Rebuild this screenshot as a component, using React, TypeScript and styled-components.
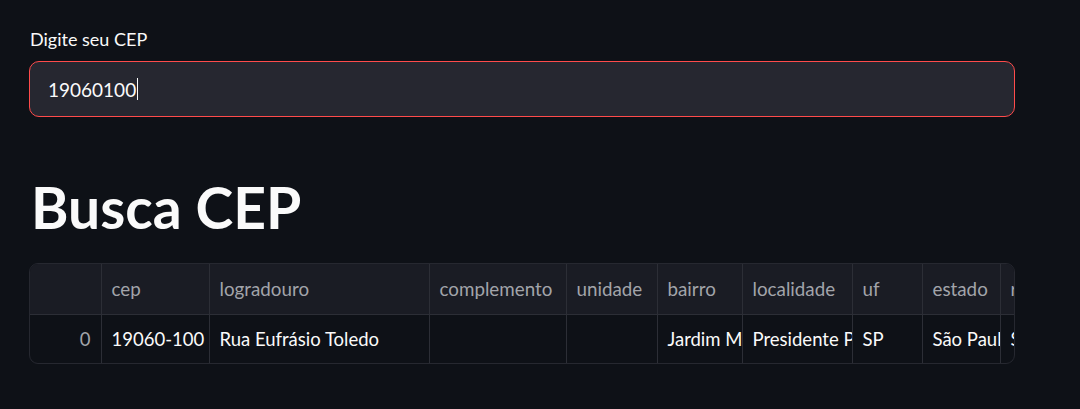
import styled, {createGlobalStyle} from 'styled-components'

const GlobalStyle = createGlobalStyle`
  html, body {
    margin: 0;
    padding: 0;
    background-color: #0e1117;
    color: #fafafa;
    font-family: Lato, "Open Sans", sans-serif;
  }
`

const columns = [
  {key: 'cep', width: 108},
  {key: 'logradouro', width: 220},
  {key: 'complemento', width: 137},
  {key: 'unidade', width: 91},
  {key: 'bairro', width: 85},
  {key: 'localidade', width: 110},
  {key: 'uf', width: 70},
  {key: 'estado', width: 78},
  {key: 'regiao', width: 100},
]

const indexWidth = 71
const tableWidth = columns.reduce((sum, c) => sum + c.width, indexWidth)

const row: Record<string, string> = {
  cep: '19060-100',
  logradouro: 'Rua Eufrásio Toledo',
  complemento: '',
  unidade: '',
  bairro: 'Jardim Marupiara',
  localidade: 'Presidente Prudente',
  uf: 'SP',
  estado: 'São Paulo',
  regiao: 'Sudeste',
}

function App() {
  return (
    <Main>
      <GlobalStyle />
      <Label>Digite seu CEP</Label>
      <InputBox>
        <InputValue>19060100</InputValue>
        <Caret />
      </InputBox>
      <Title>Busca CEP</Title>
      <Frame>
        <Table style={{width: tableWidth}}>
          <colgroup>
            <col style={{width: indexWidth}} />
            {columns.map(c => (
              <col key={c.key} style={{width: c.width}} />
            ))}
          </colgroup>
          <thead>
            <tr>
              <HeadCell />
              {columns.map(c => (
                <HeadCell key={c.key}>{c.key}</HeadCell>
              ))}
            </tr>
          </thead>
          <tbody>
            <tr>
              <IndexCell>0</IndexCell>
              {columns.map(c => (
                <Cell key={c.key}>{row[c.key]}</Cell>
              ))}
            </tr>
          </tbody>
        </Table>
      </Frame>
    </Main>
  )
}

const Main = styled.div`
  width: 986px;
  padding: 28px 0 0 29px;
`

const Label = styled.div`
  font-size: 18px;
  line-height: 22px;
  padding-left: 1px;
  margin-bottom: 11px;
`

const InputBox = styled.div`
  box-sizing: border-box;
  height: 56px;
  border: 1px solid #ff4b4b;
  border-radius: 10px;
  background-color: #262730;
  display: flex;
  align-items: center;
  padding-left: 18px;
`

const InputValue = styled.span`
  font-size: 19px;
  color: #fafafa;
`

const Caret = styled.span`
  width: 1px;
  height: 22px;
  background-color: #fafafa;
  margin-left: 1px;
`

const Title = styled.h1`
  margin: 50px 0 0 2px;
  font-size: 57px;
  line-height: 80px;
  font-weight: 700;
  color: #fafafa;
`

const Frame = styled.div`
  margin-top: 16px;
  border: 1px solid #262830;
  border-radius: 9px;
  overflow: hidden;
`

const Table = styled.table`
  border-collapse: collapse;
  table-layout: fixed;
  font-size: 18.5px;
`

const HeadCell = styled.th`
  box-sizing: border-box;
  height: 50px;
  padding: 0 10px;
  text-align: left;
  font-weight: 400;
  font-size: 18.8px;
  color: #a2a4aa;
  background-color: #1a1c24;
  border-right: 1px solid #2c2e36;
  border-bottom: 1px solid #2c2e36;
  white-space: nowrap;
  overflow: hidden;
`

const Cell = styled.td`
  box-sizing: border-box;
  height: 49px;
  padding: 0 10px;
  color: #fafafa;
  border-right: 1px solid #2c2e36;
  white-space: nowrap;
  overflow: hidden;
`

const IndexCell = styled(Cell)`
  text-align: right;
  color: #a2a4aa;
`

export default App
